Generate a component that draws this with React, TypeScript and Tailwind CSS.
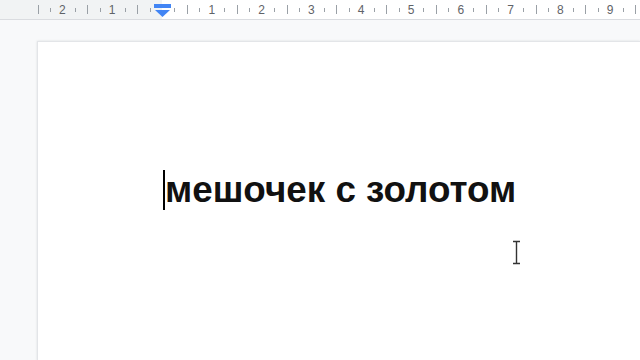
import React from "react";

const ZERO = 162;
const INCH = 49.8;

function Ruler() {
	const marks: React.ReactNode[] = [];
	for (let q = -10; q <= 40; q++) {
		const x = ZERO + (q * INCH) / 4;
		if (x < 34 || x > 640 || q === 0) continue;
		const mod = ((q % 4) + 4) % 4;
		if (mod === 0) {
			marks.push(
				<span
					key={q}
					className="absolute top-[3px] -translate-x-1/2 text-[12px] leading-[14px] text-[#5f6368]"
					style={{ left: x }}
				>
					{Math.abs(q / 4)}
				</span>
			);
		} else if (mod === 2) {
			marks.push(
				<span
					key={q}
					className="absolute top-[5px] h-[9px] w-px bg-[#9aa0a6]"
					style={{ left: x }}
				/>
			);
		} else {
			marks.push(
				<span
					key={q}
					className="absolute top-[8px] h-[4px] w-px bg-[#9aa0a6]"
					style={{ left: x }}
				/>
			);
		}
	}
	return (
		<div className="relative h-[20px] border-b border-[#dadce0] bg-white">
			<div className="absolute left-0 top-0 h-full w-[162px] bg-[#f1f3f4]" />
			{marks}
			<svg
				className="absolute left-[154px] top-[4px]"
				width="17"
				height="13"
				viewBox="0 0 17 13"
			>
				<rect x="0" y="0" width="17" height="4" fill="#4285f4" />
				<path d="M1 6 H16 L8.5 13 Z" fill="#4285f4" />
			</svg>
		</div>
	);
}

export default function App() {
	return (
		<div
			className="relative h-[360px] w-[640px] overflow-hidden bg-[#f8f9fa]"
			style={{ fontFamily: '"Liberation Sans", Arial, sans-serif' }}
		>
			<Ruler />
			<div className="ml-[37px] mt-[21px] h-[320px] border-l border-t border-[#e3e5e8] bg-white shadow-[0_0_2px_rgba(60,64,67,0.15)]">
				<div className="flex items-center pl-[125px] pt-[127px]">
					<span className="h-[40px] w-[2px] bg-black" />
					<span className="text-[36.8px] font-bold leading-[42px] text-[#111]">
						мешочек с золотом
					</span>
				</div>
			</div>
			<svg
				className="absolute left-[511px] top-[240px]"
				width="11"
				height="25"
				viewBox="0 0 11 25"
			>
				<path
					d="M2 1.5 H9 M5.5 1.5 V23.5 M2 23.5 H9"
					stroke="#333"
					strokeWidth="1.4"
					fill="none"
				/>
			</svg>
		</div>
	);
}
